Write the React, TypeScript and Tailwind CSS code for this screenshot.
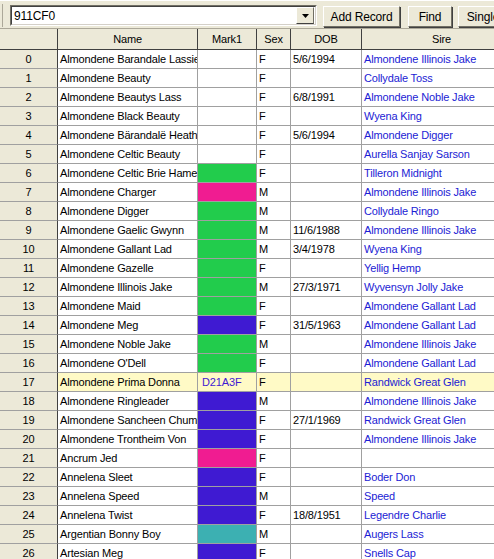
type Row = {
  name: string;
  mark?: string;
  sex: string;
  dob?: string;
  sire?: string;
};

const GREEN = "bg-[#22cc4c]";
const PINK = "bg-[#f01c91]";
const BLUE = "bg-[#3f1ad2]";
const TEAL = "bg-[#3cb0b2]";

const rows: Row[] = [
  { name: "Almondene Barandale Lassie", sex: "F", dob: "5/6/1994", sire: "Almondene Illinois Jake" },
  { name: "Almondene Beauty", sex: "F", sire: "Collydale Toss" },
  { name: "Almondene Beautys Lass", sex: "F", dob: "6/8/1991", sire: "Almondene Noble Jake" },
  { name: "Almondene Black Beauty", sex: "F", sire: "Wyena King" },
  { name: "Almondene Bärandalë Heather", sex: "F", dob: "5/6/1994", sire: "Almondene Digger" },
  { name: "Almondene Celtic Beauty", sex: "F", sire: "Aurella Sanjay Sarson" },
  { name: "Almondene Celtic Brie Hamel", mark: GREEN, sex: "F", sire: "Tilleron Midnight" },
  { name: "Almondene Charger", mark: PINK, sex: "M", sire: "Almondene Illinois Jake" },
  { name: "Almondene Digger", mark: GREEN, sex: "M", sire: "Collydale Ringo" },
  { name: "Almondene Gaelic Gwynn", mark: GREEN, sex: "M", dob: "11/6/1988", sire: "Almondene Illinois Jake" },
  { name: "Almondene Gallant Lad", mark: GREEN, sex: "M", dob: "3/4/1978", sire: "Wyena King" },
  { name: "Almondene Gazelle", mark: GREEN, sex: "F", sire: "Yellig Hemp" },
  { name: "Almondene Illinois Jake", mark: GREEN, sex: "M", dob: "27/3/1971", sire: "Wyvensyn Jolly Jake" },
  { name: "Almondene Maid", mark: GREEN, sex: "F", sire: "Almondene Gallant Lad" },
  { name: "Almondene Meg", mark: BLUE, sex: "F", dob: "31/5/1963", sire: "Almondene Gallant Lad" },
  { name: "Almondene Noble Jake", mark: GREEN, sex: "M", sire: "Almondene Illinois Jake" },
  { name: "Almondene O'Dell", mark: GREEN, sex: "F", sire: "Almondene Gallant Lad" },
  { name: "Almondene Prima Donna", mark: "edit", sex: "F", sire: "Randwick Great Glen" },
  { name: "Almondene Ringleader", mark: BLUE, sex: "M", sire: "Almondene Illinois Jake" },
  { name: "Almondene Sancheen Chum", mark: BLUE, sex: "F", dob: "27/1/1969", sire: "Randwick Great Glen" },
  { name: "Almondene Trontheim Von", mark: BLUE, sex: "F", sire: "Almondene Illinois Jake" },
  { name: "Ancrum Jed", mark: PINK, sex: "F" },
  { name: "Annelena Sleet", mark: BLUE, sex: "F", sire: "Boder Don" },
  { name: "Annelena Speed", mark: BLUE, sex: "M", sire: "Speed" },
  { name: "Annelena Twist", mark: BLUE, sex: "F", dob: "18/8/1951", sire: "Legendre Charlie" },
  { name: "Argentian Bonny Boy", mark: TEAL, sex: "M", sire: "Augers Lass" },
  { name: "Artesian Meg", mark: BLUE, sex: "F", sire: "Snells Cap" },
];

function Button({ label, width }: { label: string; width: string }) {
  return (
    <div
      className={`${width} flex h-[21px] shrink-0 items-center justify-center border border-t-white border-l-white border-r-[#716f64] border-b-[#716f64] bg-[#ece9d8] text-[12px] text-black shadow-[1px_1px_0_#404040]`}
    >
      {label}
    </div>
  );
}

function Toolbar() {
  return (
    <div className="flex h-[28px] w-[600px] items-start border-t border-t-white bg-[#ece9d8] pt-[3px]">
      <div className="ml-[2px] h-[23px] w-[1px] shrink-0 bg-[#aca899]" />
      <div className="ml-[7px] mt-[1px] flex h-[21px] w-[307px] shrink-0 items-center border border-t-[#716f64] border-l-[#716f64] border-r-white border-b-white bg-white">
        <div className="flex h-full flex-1 items-center border border-t-[#404040] border-l-[#404040] border-r-[#d4d0c8] border-b-[#d4d0c8] pl-[2px] text-[12px]">
          911CF0
        </div>
      </div>
      <div className="relative -ml-[21px] mt-[3px] flex h-[17px] w-[18px] shrink-0 items-center justify-center border border-t-white border-l-white border-r-[#716f64] border-b-[#404040] bg-[#ece9d8]">
        <svg width="7" height="4" viewBox="0 0 7 4">
          <path d="M0 0h7L3.5 4z" fill="#000" />
        </svg>
      </div>
      <div className="ml-[9px] mt-[2px] flex shrink-0 gap-[8px]">
        <Button label="Add Record" width="w-[77px]" />
        <Button label="Find" width="w-[44px]" />
        <div className="-ml-[2px]">
          <Button label="Single" width="w-[50px]" />
        </div>
      </div>
    </div>
  );
}

const headCell =
  "flex h-[20px] shrink-0 items-center justify-center border-r border-r-[#404040] bg-[#ece9d8]";
const bodyCell =
  "flex h-[19px] shrink-0 items-center overflow-hidden whitespace-nowrap border-r border-b border-[#a0a0a0] pl-[2px]";

export default function App() {
  return (
    <div
      className="h-[559px] w-[494px] overflow-hidden bg-white text-[11px] tracking-[-0.15px] text-black"
      style={{ fontFamily: '"Liberation Sans", Arial, sans-serif' }}
    >
      <Toolbar />
      <div className="flex w-[700px] border-t border-t-[#aca899] border-b border-b-[#404040]">
        <div className={`${headCell} w-[58px]`} />
        <div className={`${headCell} w-[140px]`}>Name</div>
        <div className={`${headCell} w-[59px]`}>Mark1</div>
        <div className={`${headCell} w-[34px]`}>Sex</div>
        <div className={`${headCell} w-[71px]`}>DOB</div>
        <div className={`${headCell} w-[160px]`}>Sire</div>
      </div>
      {rows.map((r, i) => {
        const hl = r.mark === "edit";
        const bg = hl ? "bg-[#fffac6]" : "bg-white";
        return (
          <div key={i} className="flex w-[700px]">
            <div className="flex h-[19px] w-[58px] shrink-0 items-center justify-center border-r border-r-[#404040] border-b border-b-[#a0a0a0] bg-[#ece9d8]">
              {i}
            </div>
            <div className={`${bodyCell} ${bg} w-[140px]`}>{r.name}</div>
            {r.mark && !hl ? (
              <div className={`${bodyCell} ${r.mark} w-[59px]`} />
            ) : (
              <div className={`${bodyCell} ${bg} w-[59px] pl-[4px] text-[#3f1ad2]`}>
                {hl ? "D21A3F" : ""}
              </div>
            )}
            <div className={`${bodyCell} ${bg} w-[34px]`}>{r.sex}</div>
            <div className={`${bodyCell} ${bg} w-[71px]`}>{r.dob ?? ""}</div>
            <div className={`${bodyCell} ${bg} w-[160px] text-[#1c1cd4]`}>
              {r.sire && i === 26 ? (
                <span className="underline decoration-red-500 decoration-dotted underline-offset-2">
                  {r.sire}
                </span>
              ) : (
                r.sire ?? ""
              )}
            </div>
          </div>
        );
      })}
    </div>
  );
}
